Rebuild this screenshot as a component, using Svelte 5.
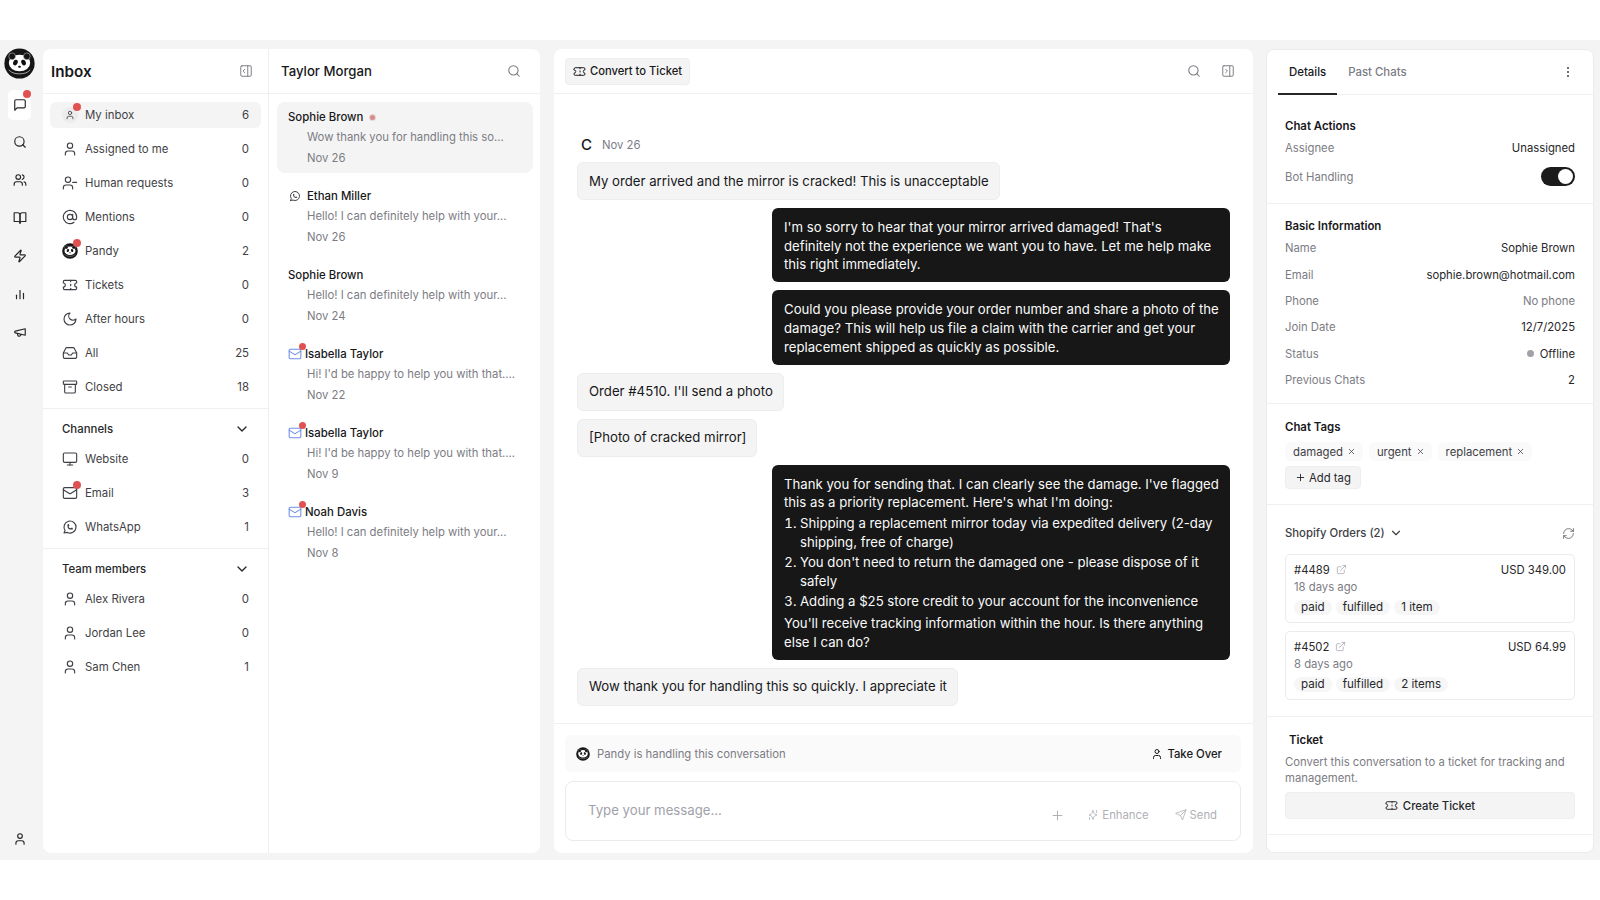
<script>
  const icons = {
    chat: '<path d="M21 15a2 2 0 0 1-2 2H7l-4 4V5a2 2 0 0 1 2-2h14a2 2 0 0 1 2 2z"/>',
    search: '<circle cx="11" cy="11" r="8"/><path d="m21 21-4.3-4.3"/>',
    users: '<path d="M16 21v-2a4 4 0 0 0-4-4H6a4 4 0 0 0-4 4v2"/><circle cx="9" cy="7" r="4"/><path d="M22 21v-2a4 4 0 0 0-3-3.87"/><path d="M16 3.13a4 4 0 0 1 0 7.75"/>',
    book: '<path d="M2 3h6a4 4 0 0 1 4 4v14a3 3 0 0 0-3-3H2z"/><path d="M22 3h-6a4 4 0 0 0-4 4v14a3 3 0 0 1 3-3h7z"/>',
    zap: '<path d="M4 14a1 1 0 0 1-.78-1.63l9.9-10.2a.5.5 0 0 1 .86.46l-1.92 6.02A1 1 0 0 0 13 10h7a1 1 0 0 1 .78 1.63l-9.9 10.2a.5.5 0 0 1-.86-.46l1.92-6.02A1 1 0 0 0 11 14z"/>',
    chart: '<path d="M6 20v-6"/><path d="M12 20V6"/><path d="M18 20v-9"/>',
    megaphone: '<path d="M21 6.5 4 10.5a1 1 0 0 0-1 1v1a1 1 0 0 0 1 1l17 4z"/><path d="M7.5 14.5l.6 3a2 2 0 0 0 2.4 1.5l1.5-.4a2 2 0 0 0 1.4-2.2"/>',
    user: '<path d="M19 21v-2a4 4 0 0 0-4-4H9a4 4 0 0 0-4 4v2"/><circle cx="12" cy="7" r="4"/>',
    userMinus: '<path d="M16 21v-2a4 4 0 0 0-4-4H6a4 4 0 0 0-4 4v2"/><circle cx="9" cy="7" r="4"/><path d="M22 11h-6"/>',
    at: '<circle cx="12" cy="12" r="4"/><path d="M16 8v5a3 3 0 0 0 6 0v-1a10 10 0 1 0-3.92 7.94"/>',
    ticket: '<path d="M2 9a3 3 0 0 1 0 6v2a2 2 0 0 0 2 2h16a2 2 0 0 0 2-2v-2a3 3 0 0 1 0-6V7a2 2 0 0 0-2-2H4a2 2 0 0 0-2 2Z"/><path d="M13 5v2"/><path d="M13 17v2"/><path d="M13 11v2"/>',
    moon: '<path d="M12 3a6 6 0 0 0 9 9 9 9 0 1 1-9-9Z"/>',
    inbox: '<path d="M22 12h-6l-2 3h-4l-2-3H2"/><path d="M5.45 5.11 2 12v6a2 2 0 0 0 2 2h16a2 2 0 0 0 2-2v-6l-3.45-6.89A2 2 0 0 0 16.76 4H7.24a2 2 0 0 0-1.79 1.11z"/>',
    archive: '<rect x="2" y="3" width="20" height="5" rx="1"/><path d="M4 8v11a2 2 0 0 0 2 2h12a2 2 0 0 0 2-2V8"/><path d="M10 12h4"/>',
    monitor: '<rect x="2" y="3" width="20" height="14" rx="2"/><path d="M8 21h8"/><path d="M12 17v4"/>',
    mail: '<rect x="2" y="4" width="20" height="16" rx="2"/><path d="m22 7-8.97 5.7a1.94 1.94 0 0 1-2.06 0L2 7"/>',
    whatsapp: '<path d="M3 21l1.65-3.8a9 9 0 1 1 3.4 2.9L3 21"/><path d="M9 10a.5.5 0 0 0 1 0V9a.5.5 0 0 0-1 0v1a5 5 0 0 0 5 5h1a.5.5 0 0 0 0-1h-1a.5.5 0 0 0 0 1"/>',
    chevron: '<path d="m6 9 6 6 6-6"/>',
    panelLeft: '<rect x="3" y="3" width="18" height="18" rx="2"/><path d="M15 3v18"/><path d="m10 15-3-3 3-3"/>',
    panelRight: '<rect x="3" y="3" width="18" height="18" rx="2"/><path d="M15 3v18"/><path d="m8 9 3 3-3 3"/>',
    x: '<path d="M18 6 6 18"/><path d="m6 6 12 12"/>',
    plus: '<path d="M5 12h14"/><path d="M12 5v14"/>',
    external: '<path d="M15 3h6v6"/><path d="M10 14 21 3"/><path d="M18 13v6a2 2 0 0 1-2 2H5a2 2 0 0 1-2-2V8a2 2 0 0 1 2-2h6"/>',
    refresh: '<path d="M3 12a9 9 0 0 1 9-9 9.75 9.75 0 0 1 6.74 2.74L21 8"/><path d="M21 3v5h-5"/><path d="M21 12a9 9 0 0 1-9 9 9.75 9.75 0 0 1-6.74-2.74L3 16"/><path d="M8 16H3v5"/>',
    send: '<path d="m22 2-7 20-4-9-9-4Z"/><path d="M22 2 11 13"/>',
    sparkle: '<path d="m12 3 1.8 5.4a2 2 0 0 0 1.3 1.3L20 12l-4.9 2.3a2 2 0 0 0-1.3 1.3L12 21l-1.8-5.4a2 2 0 0 0-1.3-1.3L4 12l4.9-2.3a2 2 0 0 0 1.3-1.3z"/><path d="M19 3v4"/><path d="M5 17v4"/>'
  };

  const rail = ['search', 'users', 'book', 'zap', 'chart', 'megaphone'];

  const inbox = [
    { label: 'My inbox', count: 6, kind: 'mine', dot: true, active: true },
    { label: 'Assigned to me', count: 0, icon: 'user' },
    { label: 'Human requests', count: 0, icon: 'userMinus' },
    { label: 'Mentions', count: 0, icon: 'at' },
    { label: 'Pandy', count: 2, kind: 'panda', dot: true },
    { label: 'Tickets', count: 0, icon: 'ticket' },
    { label: 'After hours', count: 0, icon: 'moon' },
    { label: 'All', count: 25, icon: 'inbox' },
    { label: 'Closed', count: 18, icon: 'archive' }
  ];

  const channels = [
    { label: 'Website', count: 0, icon: 'monitor' },
    { label: 'Email', count: 3, icon: 'mail', dot: true },
    { label: 'WhatsApp', count: 1, icon: 'whatsapp' }
  ];

  const team = [
    { label: 'Alex Rivera', count: 0, icon: 'user' },
    { label: 'Jordan Lee', count: 0, icon: 'user' },
    { label: 'Sam Chen', count: 1, icon: 'user' }
  ];

  const chats = [
    { name: 'Sophie Brown', text: 'Wow thank you for handling this so...', date: 'Nov 26', active: true, pending: true },
    { name: 'Ethan Miller', text: 'Hello! I can definitely help with your...', date: 'Nov 26', channel: 'whatsapp' },
    { name: 'Sophie Brown', text: 'Hello! I can definitely help with your...', date: 'Nov 24' },
    { name: 'Isabella Taylor', text: "Hi! I'd be happy to help you with that....", date: 'Nov 22', channel: 'mail' },
    { name: 'Isabella Taylor', text: "Hi! I'd be happy to help you with that....", date: 'Nov 9', channel: 'mail' },
    { name: 'Noah Davis', text: 'Hello! I can definitely help with your...', date: 'Nov 8', channel: 'mail' }
  ];

  const info = [
    ['Name', 'Sophie Brown'],
    ['Email', 'sophie.brown@hotmail.com'],
    ['Phone', 'No phone'],
    ['Join Date', '12/7/2025'],
    ['Status', 'Offline'],
    ['Previous Chats', '2']
  ];

  const orders = [
    { id: '#4489', price: 'USD 349.00', age: '18 days ago', items: '1 item' },
    { id: '#4502', price: 'USD 64.99', age: '8 days ago', items: '2 items' }
  ];
</script>

{#snippet icon(name, size = 16, width = 2)}
  <svg
    viewBox="0 0 24 24"
    width={size}
    height={size}
    fill="none"
    stroke="currentColor"
    stroke-width={width}
    stroke-linecap="round"
    stroke-linejoin="round"
    aria-hidden="true"
  >
    {@html icons[name]}
  </svg>
{/snippet}

{#snippet panda(size)}
  <svg viewBox="0 0 32 32" width={size} height={size} aria-hidden="true">
    <circle cx="16" cy="16" r="15.6" fill="#161616" />
    <path d="M5 22.5a12 7 0 0 0 22 0" fill="none" stroke="#b5b5b5" stroke-width="0.9" />
    <ellipse cx="16" cy="15.5" rx="11" ry="8.6" fill="#fff" />
    <circle cx="8.4" cy="8.6" r="3.5" fill="#161616" stroke="#ddd" stroke-width="0.5" />
    <circle cx="23.6" cy="8.6" r="3.5" fill="#161616" stroke="#ddd" stroke-width="0.5" />
    <ellipse cx="11.8" cy="15" rx="2.3" ry="3" fill="#111" transform="rotate(22 11.8 15)" />
    <ellipse cx="20.2" cy="15" rx="2.3" ry="3" fill="#111" transform="rotate(-22 20.2 15)" />
    <ellipse cx="16" cy="19.4" rx="1.5" ry="1" fill="#111" />
  </svg>
{/snippet}

{#snippet navRow(row)}
  <div class="nav-row" class:active={row.active}>
    <span class="nav-icon">
      {#if row.kind === 'panda'}
        {@render panda(16)}
      {:else if row.kind === 'mine'}
        <span class="mine">{@render icon('user', 10)}</span>
      {:else}
        {@render icon(row.icon, 16, 1.7)}
      {/if}
      {#if row.dot}<span class="dot"></span>{/if}
    </span>
    <span class="nav-label">{row.label}</span>
    <span class="nav-count">{row.count}</span>
  </div>
{/snippet}

<div class="page">
  <div class="shell">
    <nav class="rail">
      <div class="logo">{@render panda(31)}</div>
      <div class="rail-btn current">
        {@render icon('chat', 14, 2)}
        <span class="dot"></span>
      </div>
      {#each rail as name}
        <div class="rail-btn">{@render icon(name, 14, 2)}</div>
      {/each}
      <div class="rail-btn bottom">{@render icon('user', 14, 2)}</div>
    </nav>

    <aside class="inbox">
      <header class="panel-head">
        <h1>Inbox</h1>
        <span class="muted-icon">{@render icon('panelLeft', 14, 1.6)}</span>
      </header>
      <section class="nav-group">
        {#each inbox as row}
          {@render navRow(row)}
        {/each}
      </section>
      <section class="nav-group titled">
        <div class="group-title">
          <span>Channels</span>
          {@render icon('chevron', 16, 2)}
        </div>
        {#each channels as row}
          {@render navRow(row)}
        {/each}
      </section>
      <section class="nav-group titled plain">
        <div class="group-title">
          <span>Team members</span>
          {@render icon('chevron', 16, 2)}
        </div>
        {#each team as row}
          {@render navRow(row)}
        {/each}
      </section>
    </aside>

    <section class="list">
      <header class="panel-head">
        <h2>Taylor Morgan</h2>
        <span class="muted-icon">{@render icon('search', 14, 1.8)}</span>
      </header>
      <div class="chat-items">
        {#each chats as chat}
          <article class="chat-item" class:active={chat.active}>
            <div class="chat-name" class:with-channel={chat.channel}>
              {#if chat.channel === 'whatsapp'}
                <span class="channel wa">{@render icon('whatsapp', 12, 2)}</span>
              {:else if chat.channel === 'mail'}
                <span class="channel mail">
                  {@render icon('mail', 14, 1.8)}
                  <span class="dot small"></span>
                </span>
              {/if}
              <span class:mail-name={chat.channel === 'mail'}>{chat.name}</span>
              {#if chat.pending}<span class="pending"></span>{/if}
            </div>
            <div class="chat-line">{chat.text}</div>
            <div class="chat-line">{chat.date}</div>
          </article>
        {/each}
      </div>
    </section>

    <main class="chat">
      <header class="chat-head">
        <button class="convert">{@render icon('ticket', 13, 1.8)} Convert to Ticket</button>
        <div class="chat-tools">
          {@render icon('search', 14, 1.8)}
          {@render icon('panelRight', 14, 1.6)}
        </div>
      </header>

      <div class="messages">
        <div class="msg-meta">
          <span class="avatar">C</span>
          <span>Nov 26</span>
        </div>
        <div class="bubble in">My order arrived and the mirror is cracked! This is unacceptable</div>
        <div class="bubble out">
          I'm so sorry to hear that your mirror arrived damaged! That's definitely not the experience we want you to have. Let me help make this right immediately.
        </div>
        <div class="bubble out">
          Could you please provide your order number and share a photo of the damage? This will help us file a claim with the carrier and get your replacement shipped as quickly as possible.
        </div>
        <div class="bubble in">Order #4510. I'll send a photo</div>
        <div class="bubble in">[Photo of cracked mirror]</div>
        <div class="bubble out">
          <p>Thank you for sending that. I can clearly see the damage. I've flagged this as a priority replacement. Here's what I'm doing:</p>
          <ol>
            <li>Shipping a replacement mirror today via expedited delivery (2-day shipping, free of charge)</li>
            <li>You don't need to return the damaged one - please dispose of it safely</li>
            <li>Adding a $25 store credit to your account for the inconvenience</li>
          </ol>
          <p>You'll receive tracking information within the hour. Is there anything else I can do?</p>
        </div>
        <div class="bubble in">Wow thank you for handling this so quickly. I appreciate it</div>
      </div>

      <footer class="composer">
        <div class="handling">
          <span class="handling-text">{@render panda(14)} Pandy is handling this conversation</span>
          <span class="take-over">{@render icon('user', 12, 2)} Take Over</span>
        </div>
        <div class="input-box">
          <span class="placeholder">Type your message...</span>
          <div class="input-tools">
            <span class="tool add">{@render icon('plus', 15, 1.6)}</span>
            <span class="tool enhance">{@render icon('sparkle', 12, 1.6)} Enhance</span>
            <span class="tool send">{@render icon('send', 12, 1.6)} Send</span>
          </div>
        </div>
      </footer>
    </main>

    <aside class="details">
      <div class="tabs">
        <span class="tab current">Details</span>
        <span class="tab">Past Chats</span>
        <span class="more"><i></i><i></i><i></i></span>
      </div>

      <section class="block actions">
        <h3>Chat Actions</h3>
        <div class="info-row"><span>Assignee</span><b>Unassigned</b></div>
        <div class="info-row toggle-row"><span>Bot Handling</span><span class="toggle"></span></div>
      </section>

      <section class="block basic">
        <h3>Basic Information</h3>
        {#each info as [key, value]}
          <div class="info-row">
            <span>{key}</span>
            {#if key === 'Status'}
              <b class="status"><i></i>{value}</b>
            {:else if key === 'Phone'}
              <span>{value}</span>
            {:else}
              <b>{value}</b>
            {/if}
          </div>
        {/each}
      </section>

      <section class="block tags-block">
        <h3>Chat Tags</h3>
        <div class="tags">
          <span class="tag">damaged {@render icon('x', 9, 2)}</span>
          <span class="tag">urgent {@render icon('x', 9, 2)}</span>
          <span class="tag">replacement {@render icon('x', 9, 2)}</span>
        </div>
        <button class="add-tag">{@render icon('plus', 11, 2)} Add tag</button>
      </section>

      <section class="block orders">
        <div class="orders-head">
          <span class="orders-title">Shopify Orders (2) {@render icon('chevron', 14, 2)}</span>
          <span class="muted-icon">{@render icon('refresh', 13, 1.8)}</span>
        </div>
        {#each orders as order}
          <div class="order">
            <div class="order-top">
              <span class="order-id">{order.id} {@render icon('external', 11, 1.6)}</span>
              <span>{order.price}</span>
            </div>
            <div class="order-age">{order.age}</div>
            <div class="order-pills">
              <span>paid</span>
              <span>fulfilled</span>
              <span>{order.items}</span>
            </div>
          </div>
        {/each}
      </section>

      <section class="block ticket">
        <h3>Ticket</h3>
        <p>Convert this conversation to a ticket for tracking and management.</p>
        <button class="create">{@render icon('ticket', 13, 1.8)} Create Ticket</button>
      </section>
    </aside>
  </div>
</div>

<style>
  :global(body) {
    background: #fff;
    font-family: Inter, 'Noto Sans', sans-serif;
    color: #18181b;
  }

  .page {
    height: 900px;
    padding-top: 40px;
    box-sizing: border-box;
  }

  .shell {
    height: 820px;
    background: #f4f4f4;
    display: flex;
    padding: 9px 6px 7px 0;
    box-sizing: border-box;
  }

  h1,
  h2,
  h3,
  p {
    margin: 0;
  }

  button {
    font-family: inherit;
    cursor: pointer;
  }

  svg {
    flex: none;
    display: block;
  }

  .dot {
    position: absolute;
    top: -4px;
    right: -3px;
    width: 8px;
    height: 8px;
    border-radius: 50%;
    background: #e05252;
  }

  .dot.small {
    top: -4px;
    right: -4px;
    width: 7px;
    height: 7px;
  }

  /* left rail */
  .rail {
    width: 43px;
    flex: none;
    display: flex;
    flex-direction: column;
    align-items: center;
    margin-top: -1px;
    color: #27272a;
  }

  .logo {
    width: 31px;
    height: 31px;
    margin-left: -4px;
    margin-bottom: 11px;
  }

  .rail-btn {
    position: relative;
    width: 23px;
    height: 38px;
    margin-left: -4px;
    display: flex;
    align-items: center;
    justify-content: center;
  }

  .rail-btn.current {
    height: 30px;
    background: #fff;
    border-radius: 5px;
    margin-bottom: 3px;
  }

  .rail-btn.current .dot {
    top: 0;
    right: 0;
  }

  .rail-btn.bottom {
    margin-top: auto;
    margin-bottom: -5px;
  }

  /* inbox column */
  .inbox {
    width: 226px;
    flex: none;
    background: #fff;
    border-radius: 8px 0 0 8px;
    border-right: 1px solid #eeeeee;
    box-sizing: border-box;
  }

  .panel-head {
    height: 45px;
    box-sizing: border-box;
    border-bottom: 1.5px solid #f0f0f0;
    display: flex;
    align-items: center;
    justify-content: space-between;
    padding: 0 15px 0 8px;
  }

  .panel-head h1 {
    font-size: 15.2px;
    font-weight: 600;
  }

  .panel-head h2 {
    font-size: 13.2px;
    font-weight: 500;
    padding-left: 4px;
  }

  .muted-icon {
    color: #77777f;
  }

  .nav-group {
    padding: 8px 7px;
    display: flex;
    flex-direction: column;
    gap: 8px;
    border-bottom: 1.5px solid #f0f0f0;
  }

  .nav-group.plain {
    border-bottom: none;
  }

  .nav-group.titled {
    padding-top: 11px;
    gap: 8px;
  }

  .group-title {
    height: 18px;
    display: flex;
    align-items: center;
    justify-content: space-between;
    padding: 0 11px 0 12px;
    margin-bottom: 0;
    font-size: 11.4px;
    font-weight: 500;
    color: #27272a;
  }

  .nav-row {
    height: 26px;
    padding: 0 12px 0 12px;
    display: flex;
    align-items: center;
    border-radius: 6px;
    font-size: 11.4px;
    color: #3f3f46;
  }

  .nav-row.active {
    background: #f4f4f4;
  }

  .nav-icon {
    position: relative;
    width: 16px;
    height: 16px;
    margin-right: 7px;
    flex: none;
  }

  .mine {
    display: flex;
    align-items: center;
    justify-content: center;
    width: 16px;
    height: 16px;
    border-radius: 50%;
    background: #ececec;
  }

  .nav-label {
    flex: 1;
  }

  /* chat list column */
  .list {
    width: 271px;
    flex: none;
    background: #fff;
    border-radius: 0 8px 8px 0;
    margin-right: 14px;
  }

  .list .panel-head {
    padding: 0 19px 0 8px;
  }

  .chat-items {
    padding: 8px 7px 8px 8px;
    display: flex;
    flex-direction: column;
    gap: 8px;
  }

  .chat-item {
    height: 71px;
    box-sizing: border-box;
    padding: 5px 11px;
    border-radius: 8px;
  }

  .chat-item.active {
    background: #f4f4f4;
  }

  .chat-name {
    height: 20px;
    display: flex;
    align-items: center;
    font-size: 11.4px;
    font-weight: 500;
  }

  .channel {
    position: relative;
    width: 18px;
    flex: none;
    display: flex;
  }

  .channel.wa {
    width: 19px;
    padding-left: 1px;
    box-sizing: border-box;
    color: #3f3f46;
  }

  .channel.mail {
    color: #6f8fe8;
    width: 14px;
    margin-right: 3px;
  }

  .pending {
    width: 5px;
    height: 5px;
    border-radius: 50%;
    margin-left: 7px;
    background: #d98a8a;
    box-shadow: 0 0 0 1px #e9d5d5;
  }

  .chat-line {
    height: 20.5px;
    line-height: 20.5px;
    padding-left: 19px;
    font-size: 11.3px;
    color: #7c7c84;
    white-space: nowrap;
  }

  /* conversation */
  .chat {
    width: 699px;
    flex: none;
    background: #fff;
    border-radius: 8px;
    margin-right: 13px;
    display: flex;
    flex-direction: column;
  }

  .chat-head {
    height: 45px;
    flex: none;
    box-sizing: border-box;
    padding: 0 18px 0 11px;
    border-bottom: 1.5px solid #f0f0f0;
    display: flex;
    align-items: center;
    justify-content: space-between;
  }

  .convert {
    height: 27px;
    padding: 0 7px;
    display: flex;
    align-items: center;
    gap: 4px;
    background: #f4f4f4;
    border: 1px solid #eeeeee;
    border-radius: 4px;
    font-size: 11.2px;
    font-weight: 500;
    color: #18181b;
  }

  .chat-tools {
    display: flex;
    gap: 20px;
    color: #77777f;
  }

  .messages {
    flex: 1;
    padding: 41px 23px 0;
    display: flex;
    flex-direction: column;
    align-items: flex-start;
    gap: 8px;
  }

  .msg-meta {
    display: flex;
    align-items: center;
    gap: 6px;
    font-size: 11.3px;
    color: #7c7c84;
    margin-bottom: 0;
  }

  .avatar {
    width: 19px;
    height: 19px;
    display: flex;
    align-items: center;
    justify-content: center;
    font-size: 15px;
    font-weight: 500;
    color: #18181b;
  }

  .bubble {
    box-sizing: border-box;
    font-size: 13.2px;
    line-height: 18.6px;
    border-radius: 6px;
  }

  .bubble.in {
    padding: 8.5px 10px 9px 11px;
    background: #f4f4f4;
    border: 1px solid #ededed;
  }

  .bubble.out {
    width: 458px;
    padding: 10px 8px 8.5px 12px;
    align-self: flex-end;
    background: #171717;
    color: #fafafa;
  }

  .bubble ol {
    margin: 2px 0 3px;
    padding-left: 16px;
  }

  .bubble li + li {
    margin-top: 2px;
  }

  .composer {
    flex: none;
    border-top: 1.5px solid #f0f0f0;
    padding: 11px 12px 12px 11px;
    display: flex;
    flex-direction: column;
    gap: 9px;
  }

  .handling {
    height: 37px;
    padding: 0 11px;
    display: flex;
    align-items: center;
    justify-content: space-between;
    background: #fafafa;
    border-radius: 6px;
    font-size: 11.3px;
    color: #7c7c84;
  }

  .handling-text,
  .take-over,
  .tool {
    display: flex;
    align-items: center;
    gap: 7px;
  }

  .take-over {
    gap: 4px;
    padding-right: 8px;
    color: #18181b;
    font-weight: 500;
  }

  .input-box {
    height: 60px;
    box-sizing: border-box;
    border: 1px solid #ebebeb;
    border-radius: 8px;
    padding: 0 23px 0 22px;
    display: flex;
    justify-content: space-between;
  }

  .placeholder {
    font-size: 13.2px;
    color: #a1a1aa;
    margin-top: 20px;
  }

  .input-tools {
    display: flex;
    align-items: center;
    gap: 24px;
    padding-top: 8px;
    font-size: 11.3px;
    color: #b0b0b6;
  }

  .tool {
    gap: 3px;
  }

  .tool.add {
    margin-right: -2px;
  }

  .tool.send {
    margin-left: 2px;
  }

  /* details */
  .details {
    width: 328px;
    flex: none;
    background: #fff;
    border-radius: 8px;
    border: 1px solid #ececec;
    box-sizing: border-box;
    font-size: 11.3px;
  }

  .tabs {
    height: 45px;
    box-sizing: border-box;
    margin: 0 0 0 11px;
    padding-right: 23px;
    border-bottom: 1px solid #f0f0f0;
    display: flex;
    align-items: center;
    font-weight: 500;
    font-size: 11.4px;
  }

  .tab {
    height: 45px;
    box-sizing: border-box;
    line-height: 44px;
    padding: 0 11px;
    color: #7c7c84;
  }

  .tab.current {
    color: #18181b;
    border-bottom: 2px solid #27272a;
    margin-right: 0;
  }

  .more {
    margin-left: auto;
    display: flex;
    flex-direction: column;
    gap: 2px;
    margin-right: 1px;
  }

  .more i {
    width: 2px;
    height: 2px;
    background: #3f3f46;
    border-radius: 50%;
  }

  .block {
    padding: 0 18px 0 18px;
    border-bottom: 1.5px solid #f0f0f0;
    box-sizing: border-box;
  }

  .block h3 {
    font-size: 11.4px;
    font-weight: 600;
    line-height: 18px;
  }

  .actions {
    height: 109px;
    padding-top: 22px;
  }

  .basic {
    height: 200px;
    padding-top: 13px;
  }

  .tags-block {
    height: 101px;
    padding-top: 14px;
  }

  .orders {
    height: 212px;
    padding-top: 19px;
  }

  .ticket {
    height: 118px;
    padding-top: 14px;
  }

  .info-row {
    height: 26.4px;
    display: flex;
    align-items: center;
    justify-content: space-between;
    color: #7c7c84;
  }

  .actions .info-row {
    height: 29px;
    margin-top: -2px;
  }

  .actions .toggle-row {
    margin-top: 0;
  }

  .info-row b {
    font-weight: 400;
    color: #27272a;
  }

  .status {
    display: flex;
    align-items: center;
    gap: 6px;
  }

  .status i {
    width: 7px;
    height: 7px;
    border-radius: 50%;
    background: #a1a1aa;
  }

  .toggle {
    position: relative;
    width: 34px;
    height: 19px;
    border-radius: 10px;
    background: #1c1c1c;
  }

  .toggle::after {
    content: '';
    position: absolute;
    top: 2px;
    right: 2px;
    width: 15px;
    height: 15px;
    border-radius: 50%;
    background: #fff;
  }

  .tags {
    display: flex;
    gap: 6px;
    margin-top: 6px;
  }

  .tag {
    height: 19px;
    padding: 0 7px 0 8px;
    display: flex;
    align-items: center;
    gap: 4px;
    background: #fafafa;
    border-radius: 6px;
    color: #3f3f46;
  }

  .add-tag {
    height: 23px;
    margin-top: 5px;
    padding: 0 9px;
    display: flex;
    align-items: center;
    gap: 3px;
    background: #f4f4f4;
    border: 1px solid #eeeeee;
    border-radius: 4px;
    font-size: 11.3px;
    color: #27272a;
  }

  .orders-head {
    display: flex;
    align-items: center;
    justify-content: space-between;
    height: 18px;
    margin-bottom: 12px;
  }

  .orders-title {
    display: flex;
    align-items: center;
    gap: 4px;
    font-weight: 500;
    color: #3f3f46;
  }

  .order {
    height: 69px;
    box-sizing: border-box;
    border: 1px solid #ebebeb;
    border-radius: 5px;
    padding: 6px 8px;
    margin-bottom: 8px;
  }

  .order-top {
    height: 17px;
    display: flex;
    align-items: center;
    justify-content: space-between;
    color: #27272a;
  }

  .order-id {
    display: flex;
    align-items: center;
    gap: 6px;
  }

  .order-id svg {
    color: #a1a1aa;
  }

  .order-age {
    height: 18px;
    line-height: 18px;
    color: #7c7c84;
  }

  .order-pills {
    margin-top: 4px;
    display: flex;
    gap: 4px;
  }

  .order-pills span {
    height: 15px;
    line-height: 15px;
    padding: 0 7px;
    font-size: 11.6px;
    background: #f6f6f6;
    border-radius: 8px;
    color: #27272a;
  }

  .ticket h3 {
    padding-left: 4px;
  }

  .ticket p {
    margin-top: 6px;
    line-height: 15.5px;
    color: #7c7c84;
  }

  .create {
    width: 100%;
    height: 27px;
    margin-top: 6px;
    display: flex;
    align-items: center;
    justify-content: center;
    gap: 5px;
    background: #f4f4f4;
    border: 1px solid #eeeeee;
    border-radius: 4px;
    font-size: 11.3px;
    font-weight: 500;
    color: #27272a;
  }
</style>
